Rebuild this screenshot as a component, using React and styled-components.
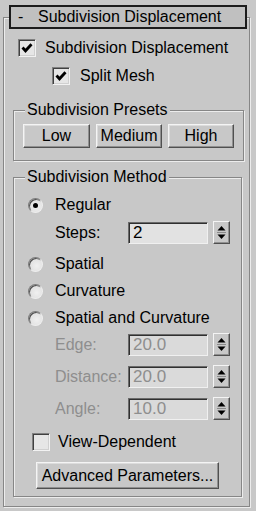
import React from "react";
import styled, { createGlobalStyle } from "styled-components";

const GlobalStyle = createGlobalStyle`
  html, body {
    margin: 0;
    padding: 0;
    background: #c8c8c8;
  }
  body {
    font-family: "Liberation Sans", Arial, sans-serif;
    font-size: 16px;
    color: #000;
  }
`;

const Panel = styled.div`
  width: 256px;
  height: 511px;
  box-sizing: border-box;
  padding: 17px 6px 4px 3px;
  overflow: hidden;
`;

// etched line: dark 1px border, light line inside top/left and outside bottom/right
const Frame = styled.div`
  height: 100%;
  box-sizing: border-box;
  border: 1px solid #868686;
  box-shadow: inset 1px 1px 0 #ececec, 1px 1px 0 #ececec;
  padding-left: 9px;
`;

const RolloutHeader = styled.div`
  margin: -13px 0 0 -4px;
  width: 238px;
  height: 24px;
  box-sizing: border-box;
  border: 2px solid #1c1c1c;
  background: #c0c0c0;
  display: flex;
  align-items: center;
  padding-left: 7px;
  line-height: 18px;
`;

const Minus = styled.span`
  width: 20px;
`;

const CheckRow = styled.label`
  display: flex;
  align-items: center;
  height: 18px;
  margin-top: ${(p) => p.$top}px;
  margin-left: ${(p) => p.$left}px;
  gap: ${(p) => p.$gap || 9}px;
  line-height: 18px;
`;

const CheckBox = styled.span`
  width: 18px;
  height: 18px;
  box-sizing: border-box;
  border: 1px solid;
  border-color: #808080 #f2f2f2 #f2f2f2 #808080;
  box-shadow: inset 1px 1px 0 #404040, inset -1px -1px 0 #d0d0d0;
  background: #e6e6e6;
  display: flex;
  align-items: center;
  justify-content: center;
  flex: none;
`;

const Group = styled.fieldset`
  margin: ${(p) => p.$top}px 0 0 0;
  width: ${(p) => p.$width}px;
  min-inline-size: 0;
  box-sizing: border-box;
  border: 1px solid #868686;
  box-shadow: inset 1px 1px 0 #ececec, 1px 1px 0 #ececec;
  padding: ${(p) => p.$pad};
`;

const Legend = styled.legend`
  padding: 0 2px;
  margin-left: ${(p) => p.$left}px;
  line-height: 18px;
  height: 18px;
  background: #c8c8c8;
`;

const PresetRow = styled.div`
  display: grid;
  grid-template-columns: 67px 66px 66px;
  column-gap: 6px;
`;

const Button = styled.div`
  height: ${(p) => p.$h || 24}px;
  width: ${(p) => (p.$w ? `${p.$w}px` : "auto")};
  margin-left: ${(p) => p.$left || 0}px;
  margin-top: ${(p) => p.$top || 0}px;
  box-sizing: border-box;
  border: 1px solid;
  border-color: #f4f4f4 #505050 #505050 #f4f4f4;
  box-shadow: inset -1px -1px 0 #909090, inset 1px 1px 0 #dcdcdc;
  background: #c8c8c8;
  display: flex;
  align-items: center;
  justify-content: center;
  line-height: 18px;
`;

const RadioRow = styled.label`
  display: flex;
  align-items: center;
  height: 22px;
  margin-top: ${(p) => p.$top}px;
  gap: 12px;
  line-height: 18px;
`;

const Radio = styled.span`
  width: 15px;
  height: 15px;
  box-sizing: border-box;
  border-radius: 50%;
  border: 1px solid;
  border-color: #7c7c7c #eeeeee #eeeeee #7c7c7c;
  box-shadow: inset 1px 1px 0 #505050;
  background: radial-gradient(circle at 60% 60%, #f0f0f0, #d8d8d8);
  display: flex;
  align-items: center;
  justify-content: center;
  flex: none;

  &::after {
    content: "";
    width: 5px;
    height: 5px;
    border-radius: 50%;
    background: ${(p) => (p.$on ? "#000" : "transparent")};
  }
`;

const SpinRow = styled.div`
  display: flex;
  align-items: center;
  height: 23px;
  margin-top: ${(p) => p.$top}px;
  padding-left: 27px;
  color: ${(p) => (p.$off ? "#8e8e8e" : "#000")};
`;

const SpinLabel = styled.span`
  width: 73px;
  line-height: 18px;
`;

const Field = styled.div`
  width: 80px;
  height: 22px;
  box-sizing: border-box;
  border: 1px solid;
  border-color: #6a6a6a #f0f0f0 #f0f0f0 #6a6a6a;
  box-shadow: inset 1px 1px 0 #303030;
  background: ${(p) => (p.$off ? "#dadada" : "#e2e2e2")};
  padding-left: 4px;
  font-size: 17px;
  line-height: 20px;
`;

const SpinButton = styled.div`
  margin-left: 5px;
  width: 17px;
  height: 23px;
  box-sizing: border-box;
  border: 1px solid;
  border-color: #f4f4f4 #505050 #505050 #f4f4f4;
  box-shadow: inset -1px -1px 0 #909090;
  background: #c8c8c8;
  display: flex;
  align-items: center;
  justify-content: center;
`;

function Check() {
  return (
    <svg width="12" height="12" viewBox="0 0 12 12">
      <path d="M1.5 5.5 L4.5 8.8 L10.5 2.2" fill="none" stroke="#000" strokeWidth="2.8" />
    </svg>
  );
}

function Arrows() {
  return (
    <svg width="11" height="19" viewBox="0 0 11 19">
      <path d="M5.5 3 L9.5 7.5 L1.5 7.5 Z" fill="#000" />
      <line x1="1" y1="9.5" x2="10" y2="9.5" stroke="#8a8a8a" strokeWidth="1" />
      <path d="M1.5 11.5 L9.5 11.5 L5.5 16 Z" fill="#000" />
    </svg>
  );
}

function Spinner({ label, value, top, off }) {
  return (
    <SpinRow $top={top} $off={off}>
      <SpinLabel>{label}</SpinLabel>
      <Field $off={off}>{value}</Field>
      <SpinButton>
        <Arrows />
      </SpinButton>
    </SpinRow>
  );
}

export default function App() {
  return (
    <>
      <GlobalStyle />
      <Panel>
        <Frame>
          <RolloutHeader>
            <Minus>-</Minus>
            <span>Subdivision Displacement</span>
          </RolloutHeader>
          <CheckRow $top={10} $left={5}>
            <CheckBox>
              <Check />
            </CheckBox>
            Subdivision Displacement
          </CheckRow>
          <CheckRow $top={10} $left={39} $gap={10}>
            <CheckBox>
              <Check />
            </CheckBox>
            Split Mesh
          </CheckRow>

          <Group $top={16} $width={231} $pad="5px 0 12px 9px">
            <Legend $left={2}>Subdivision Presets</Legend>
            <PresetRow>
              <Button>Low</Button>
              <Button>Medium</Button>
              <Button>High</Button>
            </PresetRow>
          </Group>

          <Group $top={7} $width={229} $pad="8px 0 7px 14px">
            <Legend $left={-3}>Subdivision Method</Legend>
            <RadioRow $top={0}>
              <Radio $on />
              Regular
            </RadioRow>
            <Spinner label="Steps:" value="2" top={5} />
            <RadioRow $top={9}>
              <Radio />
              Spatial
            </RadioRow>
            <RadioRow $top={5}>
              <Radio />
              Curvature
            </RadioRow>
            <RadioRow $top={5}>
              <Radio />
              Spatial and Curvature
            </RadioRow>
            <Spinner label="Edge:" value="20.0" top={4} off />
            <Spinner label="Distance:" value="20.0" top={9} off />
            <Spinner label="Angle:" value="10.0" top={9} off />
            <CheckRow $top={13} $left={4} $gap={8}>
              <CheckBox />
              View-Dependent
            </CheckRow>
            <Button $h={27} $w={183} $left={8} $top={11}>
              Advanced Parameters...
            </Button>
          </Group>
        </Frame>
      </Panel>
    </>
  );
}
